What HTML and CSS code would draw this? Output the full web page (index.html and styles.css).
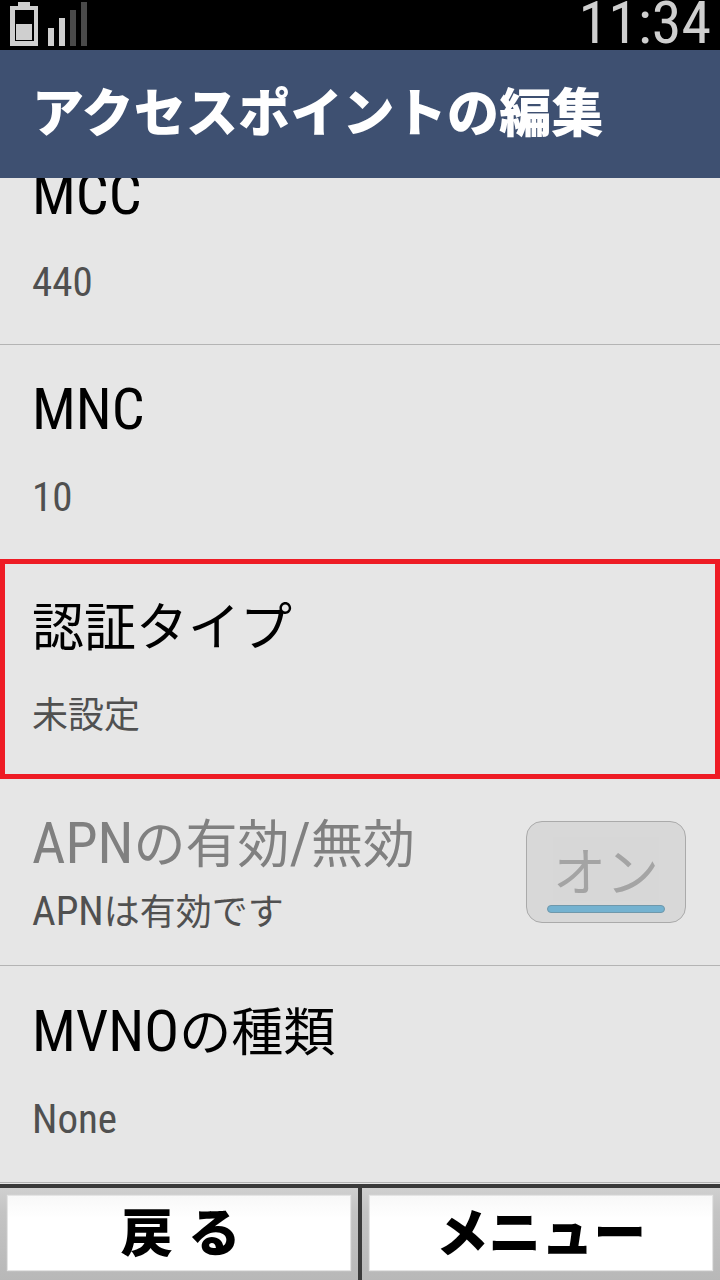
FILE: index.html
```html
<!DOCTYPE html>
<html lang="ja">
<head>
<meta charset="utf-8">
<title>アクセスポイントの編集</title>
<link rel="stylesheet" href="styles.css">
</head>
<body>
<div class="screen">
  <div class="status">
    <svg class="status-icons" width="90" height="50" viewBox="0 0 90 50">
      <rect x="18" y="2" width="12" height="4" fill="#cfcfcf"/>
      <path d="M10 6H38V46H10ZM15 10V41H34V10Z" fill="#cfcfcf" fill-rule="evenodd"/>
      <rect x="16" y="24" width="16" height="16" fill="#cfcfcf"/>
      <rect x="48" y="28" width="6" height="18" fill="#cfcfcf"/>
      <rect x="59" y="18" width="6" height="28" fill="#cfcfcf"/>
      <rect x="70" y="10" width="6" height="36" fill="#4a4a4a"/>
      <rect x="81" y="2" width="6" height="44" fill="#4a4a4a"/>
    </svg>
    <span class="clock">11:34</span>
  </div>
  <div class="titlebar">アクセスポイントの編集</div>
  <div class="list">
    <div class="row row-mcc"><div class="label"><span class="lat">MCC</span></div><div class="value"><span class="lat-s">440</span></div></div>
    <div class="row row-mnc"><div class="label"><span class="lat">MNC</span></div><div class="value"><span class="lat-s">10</span></div></div>
    <div class="row row-auth"><div class="label">認証タイプ</div><div class="value">未設定</div></div>
    <div class="row row-apn">
      <div class="apn-text"><div class="label label-off"><span class="lat">APN</span>の有効<span class="lat">/</span>無効</div><div class="value value-tight"><span class="lat-s">APN</span>は有効です</div></div>
      <div class="toggle"><span class="toggle-text">オン</span><span class="toggle-bar"></span></div>
    </div>
    <div class="row row-mvno"><div class="label"><span class="lat">MVNO</span>の種類</div><div class="value"><span class="lat-s">None</span></div></div>
  </div>
  <div class="footer">
    <div class="softkey"><div class="softkey-face softkey-back">戻 る</div></div>
    <div class="softkey"><div class="softkey-face">メニュー</div></div>
  </div>
</div>
</body>
</html>
```
FILE: styles.css
```css
* { box-sizing: border-box; }
html, body { margin: 0; padding: 0; }
body { font-family: "Noto Sans CJK JP", sans-serif; background: #e6e6e6; }
.screen { width: 720px; height: 1280px; display: flex; flex-direction: column; overflow: hidden; background: #e6e6e6; }
.status { height: 50px; flex: none; background: #000; display: flex; justify-content: space-between; align-items: center; }
.status-icons { display: block; }
.clock { color: #cfcfcf; font-family: "Roboto", sans-serif; font-stretch: condensed; font-size: 60px; line-height: 46px; height: 50px; padding-right: 9px; }
.titlebar { height: 128px; flex: none; background: #3e5071; color: #fff; font-size: 52px; letter-spacing: 0.2px; font-weight: 900; line-height: 120px; padding-left: 32px; white-space: nowrap; }
.list { flex: 1; min-height: 0; overflow: hidden; display: flex; flex-direction: column; }
.row { flex: none; padding-left: 32px; border-bottom: 1px solid #b4b4b4; }
.label { font-size: 52px; line-height: 60px; height: 60px; color: #000; white-space: nowrap; }
.value { font-size: 36px; line-height: 44px; height: 44px; color: #505050; margin-top: 36px; white-space: nowrap; }
.lat { font-family: "Roboto", sans-serif; font-stretch: condensed; font-size: 58px; }
.lat-s { font-family: "Roboto", sans-serif; font-stretch: condensed; font-size: 41px; }
.row-mcc { height: 183px; margin-top: -16px; }
.row-mnc { height: 214px; padding-top: 32px; border-bottom: none; }
.row-auth { height: 220px; padding-top: 30px; padding-left: 27px; border: 5px solid #ee1c25; }
.row-apn { height: 187px; display: flex; justify-content: space-between; align-items: flex-start; padding-top: 32px; padding-right: 34px; }
.label-off { color: #808080; }
.value-tight { margin-top: 16px; }
.toggle { width: 160px; height: 102px; margin-top: 10px; border: 1px solid #aaa; border-radius: 16px; background: #d8d8d8; display: flex; flex-direction: column; align-items: center; }
.toggle-text { font-size: 53px; line-height: 64px; margin-top: 15px; color: #a4a4a4; background: #d7d7d7; }
.toggle-bar { width: 118px; height: 8px; margin-top: 4px; border-radius: 4px; background: #74b2d0; border: 1px solid #6f98ab; }
.row-mvno { height: 217px; padding-top: 33px; }
.footer { height: 96px; flex: none; background: #3a3a3a; padding-top: 4px; display: flex; gap: 4px; }
.softkey { flex: 1; padding: 8px 8px 10px; background: linear-gradient(#d0d0d0, #c4c4c4 25%, #b8b8b8); }
.softkey-face { height: 100%; padding-bottom: 8px; background: linear-gradient(#f8f8f8, #fff 30%); box-shadow: 0 0 1px 1px #e4e4e4; display: flex; align-items: center; justify-content: center; font-size: 52.5px; font-weight: 900; color: #000; white-space: nowrap; }
.softkey-back { word-spacing: 3px; padding-left: 3px; }
```
